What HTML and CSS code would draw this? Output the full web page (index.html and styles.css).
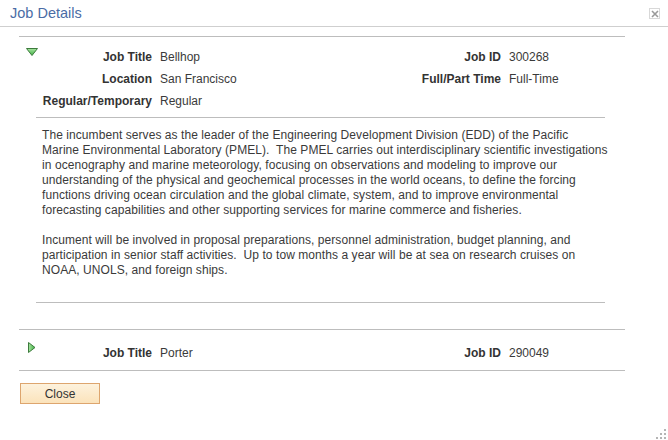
FILE: index.html
```html
<!DOCTYPE html>
<html lang="en">
<head>
    <meta charset="UTF-8">
    <meta name="viewport" content="width=device-width, initial-scale=1.0">
    <title>Job Details</title>
    <link rel="stylesheet" href="styles.css">
</head>
<body>
    <div class="dialog">
        <header class="head">
            <h1 class="title">Job Details</h1>
            <button class="x-btn" title="Close">
                <svg width="8" height="8" viewBox="0 0 8 8"><path d="M1 1L7 7M7 1L1 7" stroke="#9a9a9a" stroke-width="1.6"/></svg>
            </button>
        </header>

        <div class="job">
            <div class="job-head">
                <span class="toggle open">
                    <svg width="12" height="8" viewBox="0 0 12 8">
                        <defs><linearGradient id="g1" x1="0" y1="0" x2="0" y2="1"><stop offset="0" stop-color="#a8e6a0"/><stop offset="1" stop-color="#3fae45"/></linearGradient></defs>
                        <polygon points="0.5,0.5 11.5,0.5 6,7.5" fill="url(#g1)" stroke="#3d7a3d" stroke-width="1"/>
                    </svg>
                </span>
                <div class="fields">
                    <span class="lbl">Job Title</span><span class="val">Bellhop</span>
                    <span class="lbl">Job ID</span><span class="val">300268</span>
                    <span class="lbl">Location</span><span class="val">San Francisco</span>
                    <span class="lbl">Full/Part Time</span><span class="val">Full-Time</span>
                    <span class="lbl">Regular/Temporary</span><span class="val">Regular</span>
                </div>
            </div>
            <div class="job-desc">
<p class="desc">The incumbent serves as the leader of the Engineering Development Division (EDD) of the Pacific
Marine Environmental Laboratory (PMEL).  The PMEL carries out interdisciplinary scientific investigations
in ocenography and marine meteorology, focusing on observations and modeling to improve our
understanding of the physical and geochemical processes in the world oceans, to define the forcing
functions driving ocean circulation and the global climate, system, and to improve environmental
forecasting capabilities and other supporting services for marine commerce and fisheries.

Incument will be involved in proposal preparations, personnel administration, budget planning, and
participation in senior staff activities.  Up to tow months a year will be at sea on research cruises on
NOAA, UNOLS, and foreign ships.</p>
            </div>
        </div>

        <div class="job last">
            <div class="job-head">
                <span class="toggle shut">
                    <svg width="8" height="11" viewBox="0 0 8 11">
                        <defs><linearGradient id="g2" x1="0" y1="0" x2="1" y2="0"><stop offset="0" stop-color="#a8e6a0"/><stop offset="1" stop-color="#3fae45"/></linearGradient></defs>
                        <polygon points="0.5,0.5 7,5.5 0.5,10.5" fill="url(#g2)" stroke="#3d7a3d" stroke-width="1"/>
                    </svg>
                </span>
                <div class="fields">
                    <span class="lbl">Job Title</span><span class="val">Porter</span>
                    <span class="lbl">Job ID</span><span class="val">290049</span>
                </div>
            </div>
        </div>

        <button class="close-btn">Close</button>

        <svg class="grip" width="12" height="12" viewBox="0 0 12 12">
            <rect x="9" y="1" width="2" height="2" fill="#b5b5b5"/>
            <rect x="5" y="5" width="2" height="2" fill="#b5b5b5"/>
            <rect x="9" y="5" width="2" height="2" fill="#b5b5b5"/>
            <rect x="1" y="9" width="2" height="2" fill="#b5b5b5"/>
            <rect x="5" y="9" width="2" height="2" fill="#b5b5b5"/>
            <rect x="9" y="9" width="2" height="2" fill="#b5b5b5"/>
        </svg>
    </div>
</body>
</html>
```

FILE: styles.css
```css
body{
    margin: 0;
    padding: 0;
    background-color: #fff;
    color: #333;
    font-family: "Liberation Sans", Arial, sans-serif;
    font-size: 12px;
}
.dialog{
    position: relative;
    height: 440px;
    overflow: hidden;
}
.head{
    height: 26px;
    border-bottom: 1px solid #cfcfcf;
    display: flex;
    align-items: center;
    justify-content: space-between;
    padding: 0 8px 0 10px;
}
.title{
    margin: 0;
    font-size: 14.5px;
    font-weight: normal;
    color: #4a6ca5;
    line-height: 26px;
}
.x-btn{
    width: 11px;
    height: 11px;
    padding: 0;
    margin-top: 1px;
    border: 1px solid #d8d8d8;
    background-color: #fff;
    display: flex;
    align-items: center;
    justify-content: center;
}
.job{
    margin: 9px 43px 0 19px;
    border-top: 1px solid #bdbdbd;
}
.job.last{
    margin-top: 0;
    border-bottom: 1px solid #bdbdbd;
}
.job-head{
    display: flex;
    padding: 9px 0 0 7px;
}
.last .job-head{
    padding: 12px 0 6px 7px;
}
.toggle{
    width: 12px;
    display: flex;
    justify-content: center;
}
.toggle.open{
    padding-top: 2px;
}
.toggle.shut{
    padding-top: 0;
}
.fields{
    display: grid;
    grid-template-columns: 114px 160px 173px auto;
    grid-auto-rows: 22px;
    column-gap: 8px;
    line-height: 22px;
}
.lbl{
    font-weight: bold;
    text-align: right;
    white-space: nowrap;
}
.val{
    color: #3a3a3a;
    white-space: nowrap;
}
.job-desc{
    margin: 5px 20px 26px 17px;
    border-top: 1px solid #bdbdbd;
    border-bottom: 1px solid #bdbdbd;
    padding: 10px 0 24px 6px;
}
.desc{
    margin: 0;
    white-space: pre;
    line-height: 15px;
    letter-spacing: 0.07px;
    color: #3a3a3a;
}
.close-btn{
    display: block;
    margin: 12px 0 0 20px;
    width: 80px;
    height: 21px;
    padding: 0;
    border: 1px solid #dda56e;
    background: linear-gradient(#fdf2dd, #fbe3bb);
    font-family: "Liberation Sans", Arial, sans-serif;
    font-size: 12px;
    color: #333;
}
.grip{
    position: absolute;
    right: 1px;
    bottom: 0;
}
```
